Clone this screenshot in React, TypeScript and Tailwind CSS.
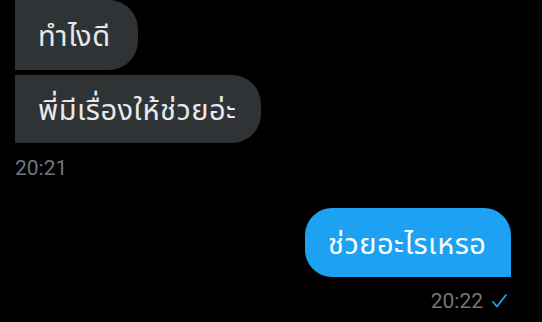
import React from "react";

export default function App() {
  return (
    <div className="w-[542px] h-[322px] bg-black overflow-hidden flex flex-col pl-[15px] pr-[31px] font-['Noto_Sans','Noto_Sans_Thai',Roboto,sans-serif]">
      <div className="flex flex-col items-start gap-[5px]">
        <div className="w-[123px] h-[70px] flex items-center bg-[#2f3336] text-[#e7e9ea] text-[29px] tracking-[0.5px] pl-[23px] rounded-r-[29px]">
          ทำไงดี
        </div>
        <div className="w-[246px] h-[68px] flex items-center bg-[#2f3336] text-[#e7e9ea] text-[29px] tracking-[0.5px] pl-[23px] rounded-r-[29px]">
          พี่มีเรื่องให้ช่วยอ่ะ
        </div>
      </div>
      <div className="mt-[15px] text-[21px] leading-[20px] text-[#71767b] font-['Roboto',sans-serif]">
        20:21
      </div>
      <div className="mt-[30px] flex flex-col items-end">
        <div className="w-[206px] h-[69px] flex items-center bg-[#1da1f2] text-white text-[29px] tracking-[0.5px] pl-[23px] rounded-tl-[27px] rounded-tr-[27px] rounded-bl-[27px]">
          ช่วยอะไรเหรอ
        </div>
        <div className="mt-[14px] mr-[4px] flex items-center gap-[9px] text-[21px] leading-[20px] text-[#71767b] font-['Roboto',sans-serif]">
          <span>20:22</span>
          <svg width="15" height="14" viewBox="0 0 15 14" fill="none">
            <path d="M1 8 L5 12.5 L14 1" stroke="#1da1f2" strokeWidth="1.8" strokeLinecap="round" strokeLinejoin="round" />
          </svg>
        </div>
      </div>
    </div>
  );
}
